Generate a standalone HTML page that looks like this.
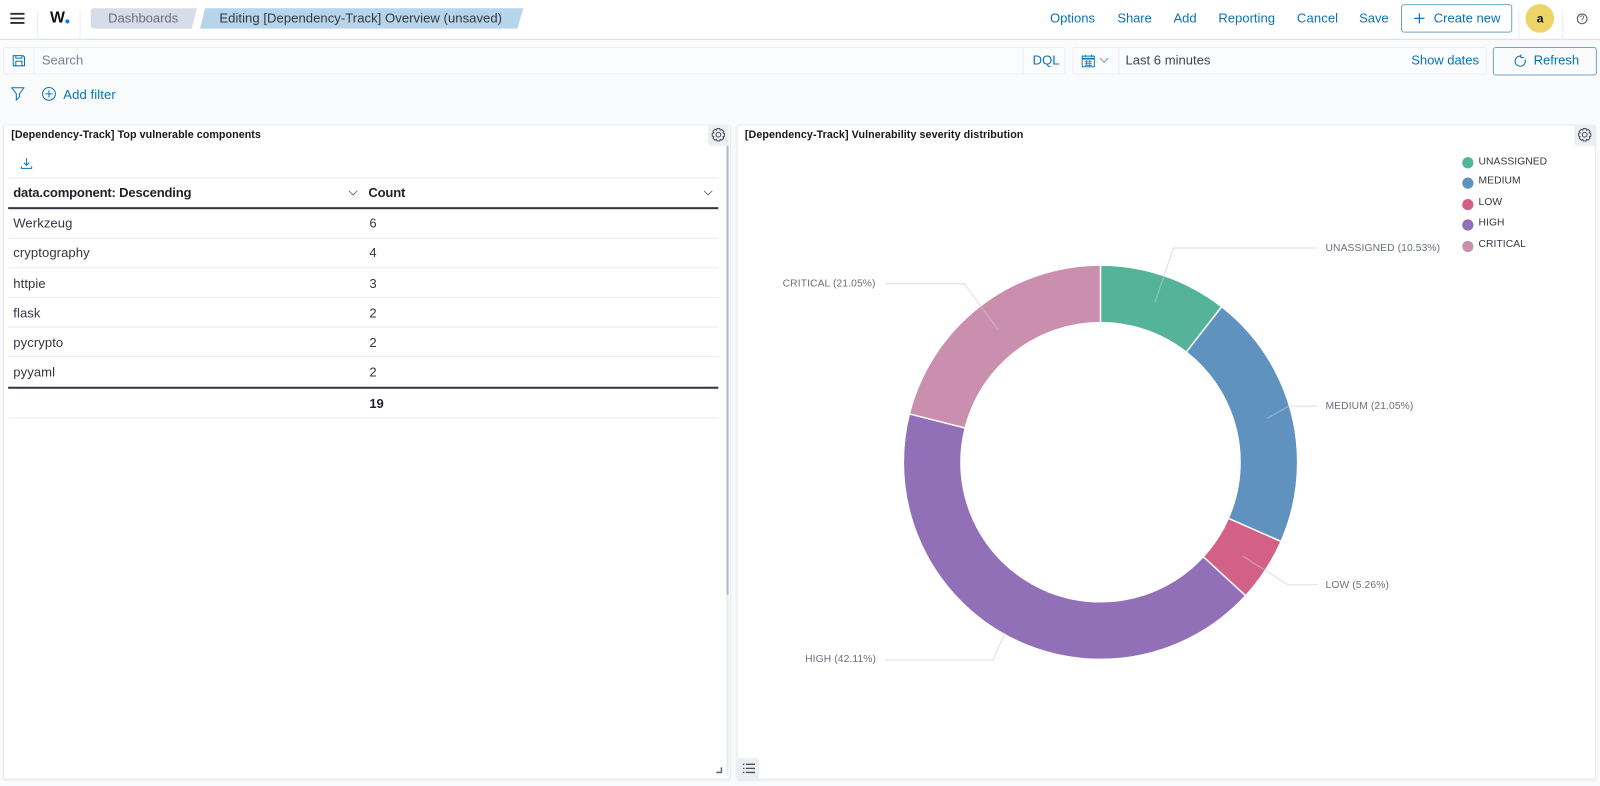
<!DOCTYPE html>
<html><head><meta charset="utf-8"><style>
*{box-sizing:border-box}
html,body{margin:0;padding:0;width:1600px;height:786px;overflow:hidden;background:#fafbfd;font-family:"Liberation Sans",sans-serif;color:#343741}
#w{position:absolute;left:0;top:0;width:1568px;height:770px;transform:scale(1.0204);transform-origin:0 0}
.a{position:absolute}
.t{position:absolute;white-space:nowrap;font-size:12.8px;line-height:16px}
.b{color:#0a73b5}
.c{letter-spacing:.08px;color:#343741}
.h{font-weight:700;color:#1f2228;letter-spacing:-.18px}
.r{position:absolute;left:8px;width:696px;height:1px;background:#e9ebef}
.k{position:absolute;left:8px;width:696px;height:2px;background:#343741}
.v{position:absolute;width:1px;background:#e9ecf1}
.l{position:absolute;white-space:nowrap;font-size:10.1px;line-height:12px;letter-spacing:.1px;color:#6a6f7b}
.g{position:absolute;white-space:nowrap;font-size:10.1px;line-height:12px;letter-spacing:.05px;color:#343741}
.d{position:absolute;left:1433px;width:11px;height:11px;border-radius:50%}
.p{position:absolute;background:#fff;border:1px solid #e9ecf2;border-radius:3px;box-shadow:0 1px 2px rgba(150,160,180,.18)}
</style></head><body><div id="w">

<div class="a" style="left:0;top:0;width:1568px;height:39px;background:#fff;border-bottom:1px solid #d8dce5"></div>
<svg class="a" style="left:10px;top:12px" width="14" height="12"><path d="M0 1.500h14M0 6h14M0 10.500h14" stroke="#2b2e36" stroke-width="1.800"/></svg>
<div class="v" style="left:36px;top:10px;height:29px"></div>
<div class="v" style="left:78px;top:10px;height:29px"></div>
<div class="t" style="left:49px;top:8px;font-size:15.5px;line-height:20px;font-weight:700;color:#111">W</div>
<div class="a" style="left:63.700px;top:19.300px;width:4px;height:4px;border-radius:50%;background:#0a7cf0"></div>
<svg class="a" style="left:88px;top:8px" width="430" height="21">
<path d="M4 0H105L100 20H4Q1 20 1 17V3Q1 0 4 0Z" fill="#d6dce8"/>
<path d="M113 0H425L419 20H108Z" fill="#b6d5ea"/>
</svg>
<div class="t" style="left:106px;top:10px;color:#6a6f7b;letter-spacing:-.05px">Dashboards</div>
<div class="t" style="left:215px;top:10px;letter-spacing:.05px">Editing [Dependency-Track] Overview (unsaved)</div>
<div class="t b" style="left:1029px;top:10px">Options</div>
<div class="t b" style="left:1095px;top:10px;letter-spacing:-.1px">Share</div>
<div class="t b" style="left:1150px;top:10px">Add</div>
<div class="t b" style="left:1194px;top:10px">Reporting</div>
<div class="t b" style="left:1271px;top:10px;letter-spacing:.1px">Cancel</div>
<div class="t b" style="left:1332px;top:10px;letter-spacing:-.1px">Save</div>
<div class="a" style="left:1373px;top:4px;width:109px;height:28px;border:1px solid #6fa4ca;border-radius:3px"></div>
<svg class="a" style="left:1385px;top:12px" width="12" height="12"><path d="M6 1v10M1 6h10" stroke="#0a73b5" stroke-width="1.200"/></svg>
<div class="t b" style="left:1405px;top:10px">Create new</div>
<div class="v" style="left:1488px;top:10px;height:29px"></div>
<div class="a" style="left:1495px;top:4px;width:28px;height:28px;border-radius:50%;background:#ecd468"></div>
<div class="t" style="left:1506px;top:10px;font-weight:700;font-size:12px;color:#111">a</div>
<div class="v" style="left:1531px;top:10px;height:29px"></div>
<svg class="a" style="left:1545px;top:13px" width="11" height="11" viewBox="0 0 11 11"><circle cx="5.500" cy="5.500" r="4.800" fill="none" stroke="#444" stroke-width=".9"/><text x="5.500" y="8.300" font-size="8" text-anchor="middle" font-family="Liberation Sans" fill="#444">?</text></svg>

<div class="a" style="left:3px;top:46px;width:1041px;height:27px;background:#fbfcfe;border:1px solid #eceff4;border-radius:2px"></div>
<div class="v" style="left:33px;top:46px;height:27px"></div>
<svg class="a" style="left:12px;top:53px" width="13" height="13" viewBox="0 0 13 13" fill="none" stroke="#0a73b5"><path d="M1 1.500h9.500l1.500 1.500v8.500h-11zM3.500 1.500v2.500h6v-2.500M3.500 11.500v-4.500h6v4.500"/></svg>
<div class="t" style="left:41px;top:51px;color:#7d818c">Search</div>
<div class="v" style="left:1002px;top:46px;height:27px"></div>
<div class="t b" style="left:1012px;top:51px">DQL</div>
<div class="a" style="left:1051px;top:46px;width:406px;height:27px;background:#fbfcfe;border:1px solid #eceff4;border-radius:2px"></div>
<div class="v" style="left:1096px;top:46px;height:27px"></div>
<svg class="a" style="left:1060px;top:53px" width="13" height="13" viewBox="0 0 13 13" fill="none" stroke="#0a73b5"><rect x=".5" y="2" width="12" height="10.500"/><path d="M.5 4.500h12" stroke-width="1.500"/><path d="M3.500 .5v2.500M9.500 .5v2.500M3 7h7M3 9h7M3 11h7M5 6v5.500M8 6v5.500" stroke-width=".8"/></svg>
<svg class="a" style="left:1077px;top:56px" width="10" height="6"><path d="M1 1l4 4 4-4" stroke="#6f9fc0" fill="none"/></svg>
<div class="t" style="left:1103px;top:51px;color:#444">Last 6 minutes</div>
<div class="t b" style="left:1383px;top:51px;letter-spacing:-.05px">Show dates</div>
<div class="a" style="left:1463px;top:46px;width:102px;height:28px;border:1px solid #6fa4ca;border-radius:3px"></div>
<svg class="a" style="left:1483px;top:53px" width="13" height="13" viewBox="0 0 13 13" fill="none" stroke="#0a73b5"><path d="M7.500 2a5 5 0 1 0 4 3.200M7.500 .3v3.200h3"/></svg>
<div class="t b" style="left:1503px;top:51px;letter-spacing:-.05px">Refresh</div>
<svg class="a" style="left:11px;top:85px" width="13" height="14" viewBox="0 0 13 14" fill="none" stroke="#0a73b5"><path d="M.5 1h12L8 7v3l-3 3V7z"/></svg>
<svg class="a" style="left:41px;top:85px" width="14" height="14" viewBox="0 0 14 14" fill="none" stroke="#0a73b5"><circle cx="7" cy="7" r="6.300"/><path d="M7 3.500v7M3.500 7h7"/></svg>
<div class="t b" style="left:62px;top:85px;letter-spacing:.1px">Add filter</div>

<!-- left panel -->
<div class="p" style="left:3px;top:122px;width:713px;height:642px"></div>
<div class="t" style="left:11px;top:124px;font-size:10.5px;font-weight:700;color:#15171c;letter-spacing:.05px">[Dependency-Track] Top vulnerable components</div>
<div class="a" style="left:694px;top:122px;width:20px;height:21px;background:#eceef2;border-radius:0 3px 0 3px"></div>
<svg class="a" style="left:697px;top:125px" width="14" height="14" viewBox="0 0 14 14" fill="none" stroke="#4a4e58" stroke-linejoin="round"><path d="M5.600 1h2.800l.4 1.700 1.500-.9 2 2-.9 1.500 1.600.4v2.800l-1.600.4.9 1.500-2 2-1.500-.9-.4 1.700H5.600l-.4-1.700-1.500.9-2-2 .9-1.500L1 8.400V5.600l1.600-.4-.9-1.500 2-2 1.500.9z"/><circle cx="7" cy="7" r="2.300"/></svg>
<div class="a" style="left:712px;top:143px;width:2px;height:440px;background:#b3b6be"></div>
<div class="a" style="left:712px;top:583px;width:2px;height:177px;background:#e9ebef"></div>
<svg class="a" style="left:20px;top:154px" width="12" height="12" viewBox="0 0 12 12" fill="none" stroke="#0a73b5"><path d="M6 1v7M3.500 5.500L6 8l2.500-2.500M1 9v2h10V9"/></svg>
<div class="r" style="top:174px"></div>
<div class="t h" style="left:13px;top:181px">data.component: Descending</div>
<div class="t h" style="left:361px;top:181px">Count</div>
<svg class="a" style="left:341px;top:186px" width="10" height="6"><path d="M1 1l4 4 4-4" stroke="#777" fill="none"/></svg>
<svg class="a" style="left:689px;top:186px" width="10" height="6"><path d="M1 1l4 4 4-4" stroke="#777" fill="none"/></svg>
<div class="k" style="top:203px"></div>
<div class="t c" style="left:13px;top:211px">Werkzeug</div><div class="t c" style="left:362px;top:211px">6</div>
<div class="r" style="top:233px"></div>
<div class="t c" style="left:13px;top:240px">cryptography</div><div class="t c" style="left:362px;top:240px">4</div>
<div class="r" style="top:262px"></div>
<div class="t c" style="left:13px;top:270px">httpie</div><div class="t c" style="left:362px;top:270px">3</div>
<div class="r" style="top:291px"></div>
<div class="t c" style="left:13px;top:299px">flask</div><div class="t c" style="left:362px;top:299px">2</div>
<div class="r" style="top:320px"></div>
<div class="t c" style="left:13px;top:328px">pycrypto</div><div class="t c" style="left:362px;top:328px">2</div>
<div class="r" style="top:349px"></div>
<div class="t c" style="left:13px;top:357px">pyyaml</div><div class="t c" style="left:362px;top:357px">2</div>
<div class="k" style="top:379px"></div>
<div class="t h" style="left:362px;top:388px">19</div>
<div class="r" style="top:409px"></div>
<svg class="a" style="left:701px;top:751px" width="7" height="7"><path d="M6 1v5H1" stroke="#666" stroke-width="1.500" fill="none"/></svg>

<!-- right panel -->
<div class="p" style="left:722px;top:122px;width:842px;height:642px"></div>
<div class="t" style="left:730px;top:124px;font-size:10.5px;font-weight:700;color:#15171c;letter-spacing:.07px">[Dependency-Track] Vulnerability severity distribution</div>
<div class="a" style="left:1543px;top:122px;width:21px;height:21px;background:#eceef2;border-radius:0 3px 0 3px"></div>
<svg class="a" style="left:1546px;top:125px" width="14" height="14" viewBox="0 0 14 14" fill="none" stroke="#4a4e58" stroke-linejoin="round"><path d="M5.600 1h2.800l.4 1.700 1.500-.9 2 2-.9 1.500 1.600.4v2.800l-1.600.4.9 1.500-2 2-1.500-.9-.4 1.700H5.600l-.4-1.700-1.500.9-2-2 .9-1.500L1 8.400V5.600l1.600-.4-.9-1.500 2-2 1.500.9z"/><circle cx="7" cy="7" r="2.300"/></svg>
<div class="a" style="left:723px;top:743px;width:21px;height:21px;background:#eceef2;border-radius:0 3px 0 3px"></div>
<svg class="a" style="left:728px;top:748px" width="12" height="10"><path d="M3 1h9M3 5h9M3 9h9M0 1h1.500M0 5h1.500M0 9h1.500" stroke="#4a4e58" stroke-width="1.300"/></svg>

<svg class="a" style="left:0;top:0" width="1568" height="770">
<g transform="rotate(-90 1078.5 453)" fill="none" stroke-width="55">
<circle cx="1078.5" cy="453" r="165" pathLength="100" stroke="#54b399" stroke-dasharray="10.53 89.47" stroke-dashoffset="0"/>
<circle cx="1078.5" cy="453" r="165" pathLength="100" stroke="#6092c0" stroke-dasharray="21.05 78.95" stroke-dashoffset="-10.53"/>
<circle cx="1078.5" cy="453" r="165" pathLength="100" stroke="#d36086" stroke-dasharray="5.26 94.74" stroke-dashoffset="-31.58"/>
<circle cx="1078.5" cy="453" r="165" pathLength="100" stroke="#9170b8" stroke-dasharray="42.11 57.89" stroke-dashoffset="-36.84"/>
<circle cx="1078.5" cy="453" r="165" pathLength="100" stroke="#ca8eae" stroke-dasharray="21.05 78.95" stroke-dashoffset="-78.95"/>
</g>
<g stroke="#fff" stroke-width="1.500">
<line x1="1078.5" y1="258" x2="1078.5" y2="318"/>
<line x1="1078.5" y1="258" x2="1078.5" y2="318" transform="rotate(37.9 1078.5 453)"/>
<line x1="1078.5" y1="258" x2="1078.5" y2="318" transform="rotate(113.7 1078.5 453)"/>
<line x1="1078.5" y1="258" x2="1078.5" y2="318" transform="rotate(132.6 1078.5 453)"/>
<line x1="1078.5" y1="258" x2="1078.5" y2="318" transform="rotate(284.2 1078.5 453)"/>
</g>
<g fill="none" stroke="#c9ccd3" stroke-opacity=".55" stroke-width="1.200">
<path d="M1132 296L1150 243H1291"/>
<path d="M1242 410L1263 398H1291"/>
<path d="M1218 545L1262 573H1291"/>
<path d="M985 620L973 647H867"/>
<path d="M978 323L945 278H867"/>
</g>
</svg>
<div class="l" style="left:1299px;top:238px">UNASSIGNED (10.53%)</div>
<div class="l" style="left:1299px;top:393px">MEDIUM (21.05%)</div>
<div class="l" style="left:1299px;top:568px">LOW (5.26%)</div>
<div class="l" style="left:789px;top:641px">HIGH (42.11%)</div>
<div class="l" style="left:767px;top:273px">CRITICAL (21.05%)</div>

<div class="d" style="top:154px;background:#54b399"></div><div class="g" style="left:1449px;top:153px">UNASSIGNED</div>
<div class="d" style="top:174px;background:#6092c0"></div><div class="g" style="left:1449px;top:172px">MEDIUM</div>
<div class="d" style="top:195px;background:#d36086"></div><div class="g" style="left:1449px;top:193px">LOW</div>
<div class="d" style="top:215px;background:#9170b8"></div><div class="g" style="left:1449px;top:213px">HIGH</div>
<div class="d" style="top:236px;background:#ca8eae"></div><div class="g" style="left:1449px;top:234px">CRITICAL</div>

</div></body></html>
